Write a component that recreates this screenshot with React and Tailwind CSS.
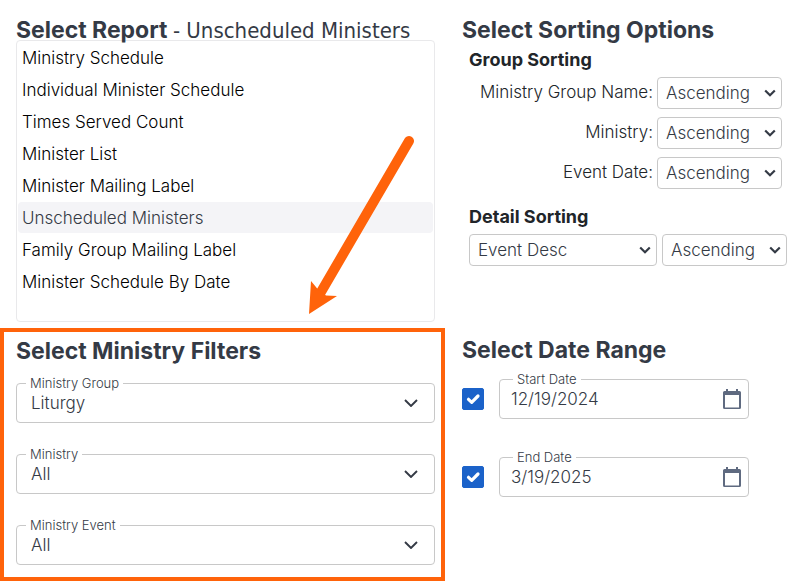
import { useState } from 'react';

const reports = [
  'Ministry Schedule',
  'Individual Minister Schedule',
  'Times Served Count',
  'Minister List',
  'Minister Mailing Label',
  'Unscheduled Ministers',
  'Family Group Mailing Label',
  'Minister Schedule By Date',
];

const filters = [
  { id: 'group', label: 'Ministry Group', options: ['Liturgy', 'All'] },
  { id: 'ministry', label: 'Ministry', options: ['All'] },
  { id: 'event', label: 'Ministry Event', options: ['All'] },
];

const groupSorts = [
  { id: 'sort-group', label: 'Ministry Group Name:' },
  { id: 'sort-ministry', label: 'Ministry:' },
  { id: 'sort-date', label: 'Event Date:' },
];

function Heading({ children }) {
  return <h2 className="text-[23px] leading-7 font-bold text-[#343a45]">{children}</h2>;
}

function SortSelect({ id, label, options, className }) {
  return (
    <div className={`relative ${className}`}>
      <select
        id={id}
        aria-label={label}
        className="h-8 w-full appearance-none rounded border border-[#c8c8c8] bg-white pt-0.5 pl-2 text-[17px] font-light text-[#343a45]"
      >
        {options.map((option) => (
          <option key={option}>{option}</option>
        ))}
      </select>
      <svg className="pointer-events-none absolute top-3 right-1.5 h-2 w-3" viewBox="0 0 12 8" fill="none">
        <path d="M1.2 1.5 6 6.3l4.8-4.8" stroke="#343a45" strokeWidth="2.2" />
      </svg>
    </div>
  );
}

function FilterSelect({ id, label, options }) {
  return (
    <div className="relative">
      <select
        id={id}
        className="h-10 w-full appearance-none rounded border border-[#c8c8c8] bg-white pt-0.5 pl-3.5 text-[17px] font-light text-[#343a45]"
      >
        {options.map((option) => (
          <option key={option}>{option}</option>
        ))}
      </select>
      <label htmlFor={id} className="absolute -top-2 left-2.5 bg-white px-1 text-[13px] leading-4 font-light text-[#343a45]">
        {label}
      </label>
      <svg className="pointer-events-none absolute top-4 right-[17px] h-2 w-3.5" viewBox="0 0 14 8" fill="none">
        <path d="m1 1 6 6 6-6" stroke="#343a45" strokeWidth="1.9" />
      </svg>
    </div>
  );
}

function DateField({ id, label, defaultValue }) {
  const [enabled, setEnabled] = useState(true);

  return (
    <div className="flex items-center gap-[15px]">
      <span className="relative size-[22px]">
        <input
          type="checkbox"
          aria-label={`Use ${label}`}
          checked={enabled}
          onChange={(e) => setEnabled(e.target.checked)}
          className="block size-[22px] appearance-none rounded-xs border border-[#1b62c9] bg-white checked:bg-[#1b62c9]"
        />
        <svg className="pointer-events-none absolute inset-0 size-[22px]" viewBox="0 0 22 22" fill="none">
          <path d="m6.5 11.3 3.2 3L16 8" stroke="#fff" strokeWidth="3.2" strokeLinecap="round" strokeLinejoin="round" />
        </svg>
      </span>
      <div className="relative w-[250px]">
        <input
          id={id}
          type="text"
          defaultValue={defaultValue}
          disabled={!enabled}
          className="h-10 w-full rounded border border-[#c8c8c8] bg-white pr-10 pl-[11px] text-[17px] font-light text-[#343a45]"
        />
        <label htmlFor={id} className="absolute -top-2 left-3.5 bg-white px-1 text-[13px] leading-4 font-light text-[#343a45]">
          {label}
        </label>
        <button type="button" aria-label={`Pick ${label}`} className="absolute top-2.5 right-2">
          <svg className="block h-5 w-[18px]" viewBox="0 0 18 20" fill="#5f6a80">
            <path
              d="M3 0h2v2h8V0h2v2h1.5A1.5 1.5 0 0 1 18 3.5v15a1.5 1.5 0 0 1-1.5 1.5h-15A1.5 1.5 0 0 1 0 18.5v-15A1.5 1.5 0 0 1 1.5 2H3ZM2 6v12.500h14V6Z"
              fillRule="evenodd"
            />
          </svg>
        </button>
      </div>
    </div>
  );
}

export default function App() {
  const [selected, setSelected] = useState('Unscheduled Ministers');

  return (
    <main className="grid grid-cols-[5fr_4fr] bg-white font-['Inter',sans-serif]">
      <section className="relative pt-4 pr-2.5 pb-1.5 pl-4">
        <div className="h-6 whitespace-nowrap">
          <Heading>
            Select Report <span className="font-['DejaVu_Sans_Condensed','DejaVu_Sans',sans-serif] text-[22px] font-normal">- {selected}</span>
          </Heading>
        </div>
        <ul className="h-[282px] space-y-px rounded border border-[#e9e9eb] p-px">
          {reports.map((report) => (
            <li key={report}>
              <button
                type="button"
                onClick={() => setSelected(report)}
                className={
                  report === selected
                    ? 'h-[31px] w-full rounded bg-[#f4f4f7] px-1 pt-0.5 text-left text-[17px] font-light text-[#343a45]'
                    : 'h-[31px] w-full rounded px-1 pt-0.5 text-left text-[17px] font-light text-black'
                }
              >
                {report}
              </button>
            </li>
          ))}
        </ul>
        <svg className="pointer-events-none absolute top-[132px] left-[305px] h-[184px] w-28" viewBox="305 132 112 184" fill="none">
          <path d="M409 141 321 292" stroke="#ff630a" strokeWidth="10" strokeLinecap="round" />
          <path d="m309 314 2-33 7 8.5 8 6 11 .5Z" fill="#ff630a" />
        </svg>
      </section>

      <section className="pt-4 pl-[17px]">
        <Heading>Select Sorting Options</Heading>
        <div className="pl-[7px]">
          <h3 className="pt-1 text-lg leading-6 font-bold text-[#212529]">Group Sorting</h3>
          <div className="mt-[5px] space-y-2">
            {groupSorts.map((sort) => (
              <div key={sort.id} className="flex gap-1">
                <label htmlFor={sort.id} className="w-[184px] text-right text-[17px] leading-[30px] font-light whitespace-nowrap text-[#212529]">
                  {sort.label}
                </label>
                <SortSelect id={sort.id} options={['Ascending', 'Descending']} className="w-[125px]" />
              </div>
            ))}
          </div>
          <h3 className="mt-4 text-lg leading-6 font-bold text-[#212529]">Detail Sorting</h3>
          <div className="mt-[5px] flex gap-[5px]">
            <SortSelect id="detail-field" label="Detail field" options={['Event Desc', 'Event Date']} className="w-[188px]" />
            <SortSelect id="detail-order" label="Detail order" options={['Ascending', 'Descending']} className="w-[125px]" />
          </div>
        </div>
      </section>

      <section className="border-4 border-[#ff630a] pt-[5px] pr-1.5 pb-3 pl-3">
        <Heading>Select Ministry Filters</Heading>
        <div className="mt-[18px] space-y-[31px]">
          {filters.map((filter) => (
            <FilterSelect key={filter.id} {...filter} />
          ))}
        </div>
      </section>

      <section className="pt-2 pl-[17px]">
        <Heading>Select Date Range</Heading>
        <div className="mt-[15px] space-y-[38px]">
          <DateField id="start-date" label="Start Date" defaultValue="12/19/2024" />
          <DateField id="end-date" label="End Date" defaultValue="3/19/2025" />
        </div>
      </section>
    </main>
  );
}
